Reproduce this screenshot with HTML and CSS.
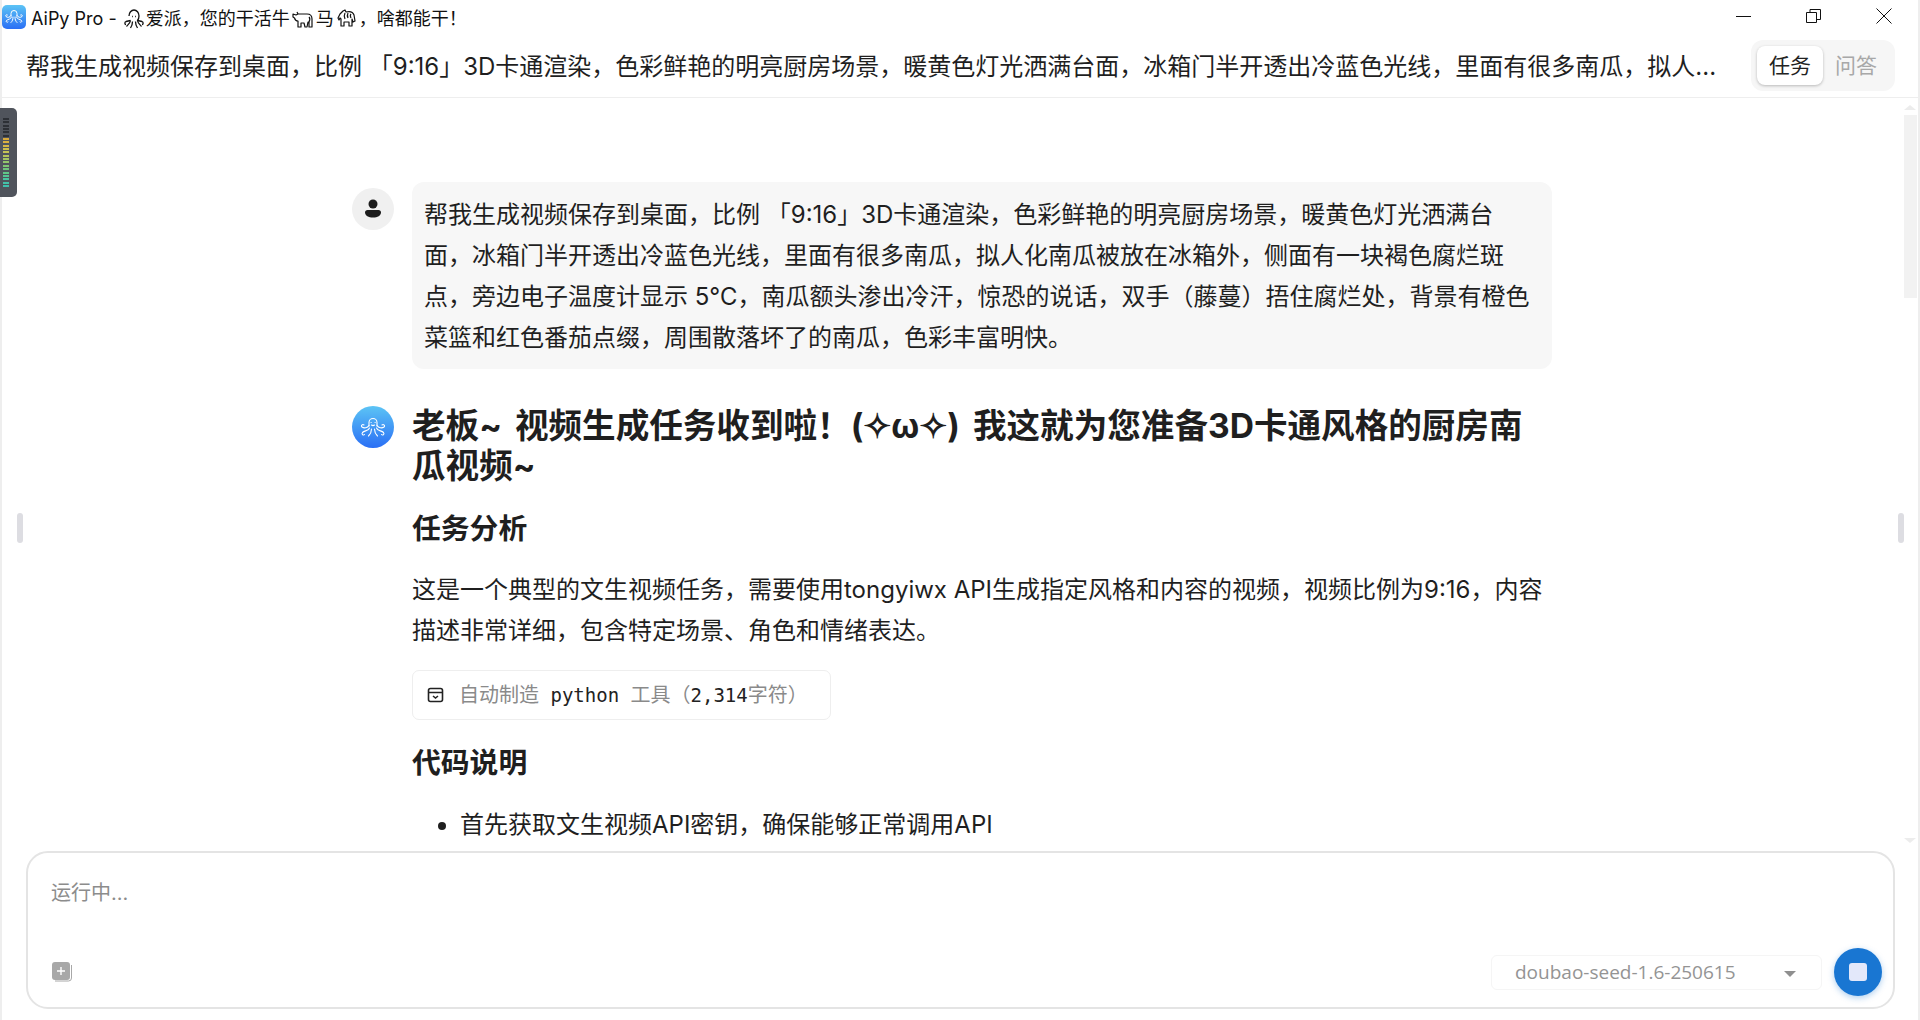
FILE: index.html
```html
<!DOCTYPE html>
<html lang="zh-CN">
<head>
  <meta charset="UTF-8">
  <title>AiPy Pro</title>
  <link rel="stylesheet" href="styles.css">
</head>
<body>
  <div class="titlebar">
    <svg class="app-icon" width="24" height="24" viewBox="0 0 24 24">
      <defs>
        <linearGradient id="iconBlue" x1="0" y1="0" x2="0" y2="1">
          <stop offset="0" stop-color="#5cc4f5"/>
          <stop offset="1" stop-color="#2a6ff5"/>
        </linearGradient>
      </defs>
      <rect width="24" height="24" rx="5" fill="url(#iconBlue)"/>
      <g fill="none" stroke="#fff" stroke-width="1" stroke-linecap="round">
        <path d="M9 11V8.500a3 3 0 0 1 6 0V11"/>
        <path d="M9 10.500c-1 2-3.500 2.500-5 1-1-1 .5-2.500 1.500-1.500M9.500 12c-.5 2.500-3.500 2-5 3.500-1 1 .5 2.500 1.500 1.500M11 12c0 2.500-.5 4-2 5.500M15 10.500c1 2 3.500 2.500 5 1 1-1-.5-2.500-1.500-1.500M14.500 12c.5 2.500 3.500 2 5 3.500 1 1-.5 2.500-1.500 1.500M13 12c0 2.500.5 4 2 5.500"/>
      </g>
    </svg>
    <span class="app-title">AiPy Pro - <svg class="emoji" width="20" height="20" viewBox="0 0 20 20" fill="#fff" stroke="#111" stroke-width="1.300" stroke-linejoin="round">
        <path d="M5 7a5 6 0 0 1 10 0c0 2-.7 3.500-1.500 4.500l4.500 1c1.500.5 1.500 3 0 3M6.500 11.500L2 12.500c-1.500.5-1.500 3 0 3"/>
        <path d="M6.500 11.500c-.5 3-2.500 4-4 6M8.500 12.500c0 3-1 5-2 6.500M11.500 12.500c0 3 1 5 2 6.500M13.500 11.500c.5 3 2.500 4 4 6" fill="none"/>
        <path d="M8 7.500h.8M11.200 7.500h.8" fill="none"/>
      </svg>爱派，您的干活牛<svg class="emoji" width="22" height="20" viewBox="0 0 22 20" fill="#fff" stroke="#111" stroke-width="1.200" stroke-linejoin="round">
        <path d="M1 5l3 1 2-1h9c3 0 5 2 5 5v8h-3v-5h-1l-1 5h-2l-1-4H9v4H6v-6c-2 0-3-1-3.500-3L1 8z"/>
        <path d="M17 8c1 1 1 3 0 5M6 5L5 3" fill="none"/>
      </svg>马<svg class="emoji" width="21" height="20" viewBox="0 0 21 20" fill="#fff" stroke="#111" stroke-width="1.200" stroke-linejoin="round">
        <path d="M2 9l2-4 3-3 2-1 1 2c4-1 7 0 8 3l1 6-2 1-1-3v7h-3v-4H8v4H5v-7L4 9 3 11z"/>
        <path d="M9 4c-1 2-1 4 0 6M12 4c-1 2-1 3 0 5M15 5c-1 1-1 2 0 4" fill="none"/>
      </svg>，啥都能干！</span>
    <div class="win-btns">
      <svg width="16" height="16" viewBox="0 0 16 16"><path d="M0 8.500h15" stroke="#111" fill="none"/></svg>
      <svg width="16" height="16" viewBox="0 0 16 16"><path d="M.5 4.500h10v10H.5zM4 4.500V1.500h10.500v10h-4" stroke="#111" fill="none"/></svg>
      <svg width="16" height="16" viewBox="0 0 16 16"><path d="M.5.500l15 15M15.500.500l-15 15" stroke="#111" fill="none"/></svg>
    </div>
  </div>

  <div class="task-head">
    <div class="task-title">帮我生成视频保存到桌面，比例 「9:16」3D卡通渲染，色彩鲜艳的明亮厨房场景，暖黄色灯光洒满台面，冰箱门半开透出冷蓝色光线，里面有很多南瓜，拟人...</div>
    <div class="tabs">
      <span class="tab active">任务</span>
      <span class="tab">问答</span>
    </div>
  </div>

  <div class="chat-area">
    <div class="chat">
      <div class="msg">
        <div class="avatar user">
          <svg width="18" height="20" viewBox="0 0 18 20" fill="#1c1c1c">
            <circle cx="9" cy="5" r="4.500"/>
            <path d="M1 13.500c0-1.500 1-2.500 2.500-2.500h11c1.500 0 2.500 1 2.500 2.500 0 3-3.500 5-8 5s-8-2-8-5z"/>
          </svg>
        </div>
        <div class="bubble">帮我生成视频保存到桌面，比例 「9:16」3D卡通渲染，色彩鲜艳的明亮厨房场景，暖黄色灯光洒满台面，冰箱门半开透出冷蓝色光线，里面有很多南瓜，拟人化南瓜被放在冰箱外，侧面有一块褐色腐烂斑点，旁边电子温度计显示 5℃，南瓜额头渗出冷汗，惊恐的说话，双手（藤蔓）捂住腐烂处，背景有橙色菜篮和红色番茄点缀，周围散落坏了的南瓜，色彩丰富明快。</div>
      </div>

      <div class="msg reply">
        <div class="avatar bot">
          <svg width="28" height="22" viewBox="0 0 28 22" fill="none" stroke="#fff" stroke-width="1.100" stroke-linecap="round">
            <path d="M10 10V6.500a4 4 0 0 1 8 0V10"/>
            <path d="M12 6.500h.2M16 6.500h.2M12.500 9c1 .8 2 .8 3 0"/>
            <path d="M10 9.500c-1.500 2.500-5 3-7 1.500-1.500-1.300.5-3.300 2-2M10.500 12c-1 3-5 2.500-7 4.500-1.300 1.500.8 3.300 2 2M12.500 13c0 3-1 5-3 7"/>
            <path d="M18 9.500c1.500 2.500 5 3 7 1.500 1.500-1.300-.5-3.300-2-2M17.500 12c1 3 5 2.500 7 4.500 1.300 1.500-.8 3.300-2 2M15.500 13c0 3 1 5 3 7"/>
          </svg>
        </div>
        <div class="reply-body">
          <h1>老板~ 视频生成任务收到啦！(✧ω✧) 我这就为您准备3D卡通风格的厨房南瓜视频~</h1>
          <h2>任务分析</h2>
          <p>这是一个典型的文生视频任务，需要使用tongyiwx API生成指定风格和内容的视频，视频比例为9:16，内容描述非常详细，包含特定场景、角色和情绪表达。</p>
          <div class="tool-chip">
            <svg width="17" height="18" viewBox="0 0 17 18" fill="none" stroke="#222" stroke-width="1.600">
              <rect x="1.500" y="2.500" width="14" height="13" rx="2"/>
              <path d="M1.500 6.500h14M6 10l2.500 2 2.500-2"/>
            </svg>
            <span>自动制造<code> python </code>工具（<code>2,314</code>字符）</span>
          </div>
          <h2>代码说明</h2>
          <ul>
            <li>首先获取文生视频API密钥，确保能够正常调用API</li>
          </ul>
        </div>
      </div>
    </div>
    <div class="scrollbar">
      <span class="arrow up"></span>
      <span class="thumb"></span>
      <span class="arrow down"></span>
    </div>
  </div>

  <div class="composer-wrap">
    <div class="composer">
      <div class="placeholder">运行中...</div>
      <div class="composer-foot">
        <svg width="22" height="22" viewBox="0 0 22 22">
          <path d="M20.500 4v13a3 3 0 0 1-3 3H4" fill="none" stroke="#a8a8a8"/>
          <rect x="1" y="1" width="18" height="18" rx="3" fill="#a8a8a8"/>
          <path d="M10 6v8M6 10h8" stroke="#fff" stroke-width="1.400"/>
        </svg>
        <div class="model-select">
          <span>doubao-seed-1.6-250615</span>
          <i class="caret"></i>
        </div>
        <button class="stop-btn"><i></i></button>
      </div>
    </div>
  </div>

  <!-- floating bits over the window -->
  <div class="meter">
    <i class="off"></i><i class="off"></i><i class="off"></i><i class="off"></i><i class="off"></i><i class="off"></i>
    <i style="background:#d9a93c"></i><i style="background:#d8b03f"></i><i style="background:#d4b845"></i><i style="background:#cdbf4c"></i><i style="background:#c3c354"></i><i style="background:#b4c55a"></i><i style="background:#a4c662"></i><i style="background:#92c66a"></i><i style="background:#80c672"></i><i style="background:#6fc67c"></i><i style="background:#60c688"></i><i style="background:#54c594"></i><i style="background:#4ac4a0"></i><i style="background:#44c2a8"></i><i style="background:#40c0ae"></i>
  </div>
  <span class="handle left"></span>
  <span class="handle right"></span>
</body>
</html>
```

FILE: styles.css
```css
* {
  box-sizing: border-box;
}

html, body {
  height: 100%;
}

body {
  margin: 0;
  display: flex;
  flex-direction: column;
  overflow: hidden;
  background: #fff;
  color: #1f1f1f;
  font-family: "Inter", "Noto Sans CJK SC", sans-serif;
  border-left: 2px solid #eeeeee;
  border-right: 2px solid #eeeeee;
}

.titlebar {
  height: 34px;
  margin: 0 -2px;
  padding-left: 2px;
  display: flex;
  align-items: center;
  gap: 5px;
  background: #fff;
  flex-shrink: 0;
}

.app-title {
  font-size: 18px;
  color: #111;
  white-space: nowrap;
}

.emoji {
  vertical-align: -4px;
  margin: 0 2px;
}

.win-btns {
  margin-left: auto;
  display: flex;
  gap: 54px;
  padding-right: 28px;
  margin-top: -2px;
}

.task-head {
  height: 64px;
  flex-shrink: 0;
  padding: 0 23px 1px 24px;
  display: flex;
  align-items: center;
  gap: 30px;
  border-bottom: 1px solid #eeeeee;
}

.task-title {
  flex: 1;
  font-size: 24px;
  white-space: nowrap;
  margin-bottom: 2px;
}

.tabs {
  display: flex;
  align-items: center;
  padding: 6px;
  background: #f6f6f6;
  border-radius: 12px;
  height: 51px;
}

.tab {
  width: 66px;
  height: 39px;
  line-height: 39px;
  text-align: center;
  font-size: 21px;
  color: #a8a8a8;
  border-radius: 8px;
}

.tab.active {
  background: #fff;
  color: #222;
  box-shadow: 0 1px 3px rgba(0,0,0,0.25);
}

.chat-area {
  flex: 1;
  min-height: 0;
  overflow: hidden;
  position: relative;
  padding-top: 84px;
}

.chat {
  width: 1200px;
  margin-left: 350px;
}

.msg {
  display: flex;
  gap: 18px;
}

.avatar {
  width: 42px;
  height: 42px;
  border-radius: 50%;
  flex-shrink: 0;
  display: flex;
  align-items: center;
  justify-content: center;
}

.avatar.user {
  margin-top: 6px;
  background: #f0f0f0;
}

.avatar.bot {
  background: linear-gradient(#5cc4f5, #2a6ff5);
}

.bubble {
  flex: 1;
  padding: 12px 12px 11px;
  background: #f7f7f7;
  border-radius: 12px;
  font-size: 24px;
  line-height: 41px;
}

.reply {
  margin-top: 37px;
}

.reply-body {
  flex: 1;
}

h1 {
  margin: 0;
  font-size: 33.600px;
  line-height: 40px;
  font-weight: 700;
  word-spacing: 5px;
}

h2 {
  margin: 23px 0 0;
  font-size: 28.800px;
  line-height: 40px;
  font-weight: 700;
}

p {
  margin: 20px 0 0;
  font-size: 24px;
  line-height: 41px;
}

.tool-chip {
  margin-top: 19px;
  display: inline-flex;
  align-items: center;
  gap: 15px;
  height: 50px;
  padding: 0 22px 0 14px;
  border: 1px solid #eeeeee;
  border-radius: 7px;
  font-size: 20px;
  color: #8a8a8a;
}

.tool-chip span {
  margin-top: -3px;
}

code {
  font-family: "DejaVu Sans Mono", monospace;
  font-size: 19px;
  color: #222;
  white-space: pre;
}

ul {
  margin: 21px 0 0;
  padding-left: 48px;
  font-size: 24px;
  line-height: 41px;
}

.scrollbar {
  position: absolute;
  top: 0;
  right: 1px;
  bottom: 0;
  width: 13px;
}

.thumb {
  position: absolute;
  top: 17px;
  left: 0;
  width: 13px;
  height: 183px;
  background: #f2f2f2;
}

.arrow {
  position: absolute;
  left: 0;
  width: 0;
  height: 0;
  border-left: 6.500px solid transparent;
  border-right: 6.500px solid transparent;
}

.arrow.up {
  top: 7px;
  border-bottom: 5px solid #ececec;
}

.arrow.down {
  bottom: 8px;
  border-top: 5px solid #ececec;
}

.composer-wrap {
  flex-shrink: 0;
  padding: 0 23px 11px 24px;
}

.composer {
  height: 158px;
  border: 2px solid #e4e4e4;
  border-radius: 22px;
  padding: 25px 11px 0 23px;
  display: flex;
  flex-direction: column;
}

.placeholder {
  font-size: 20px;
  line-height: 30px;
  color: #8c8c8c;
}

.composer-foot {
  margin-top: auto;
  margin-bottom: 11px;
  display: flex;
  align-items: center;
}

.model-select {
  margin-left: auto;
  width: 331px;
  height: 35px;
  padding: 0 25px 0 23px;
  display: flex;
  align-items: center;
  justify-content: space-between;
  border: 1px solid #f5f5f5;
  border-radius: 6px;
  font-family: "Open Sans", sans-serif;
  font-size: 19px;
  color: #949494;
}

.caret {
  margin-top: 4px;
  border-left: 6px solid transparent;
  border-right: 6px solid transparent;
  border-top: 6px solid #8f8f8f;
}

.stop-btn {
  margin-left: 12px;
  width: 48px;
  height: 48px;
  padding: 0;
  border: none;
  border-radius: 50%;
  background: #1976d2;
  box-shadow: 0 2px 6px rgba(25,118,210,0.35);
  display: flex;
  align-items: center;
  justify-content: center;
}

.stop-btn i {
  width: 18px;
  height: 18px;
  border-radius: 3px;
  background: #e3e8fa;
}

.meter {
  position: absolute;
  top: 108px;
  left: 0;
  width: 17px;
  height: 89px;
  padding: 10px 8px 0 3px;
  background: #50545c;
  border-radius: 0 5px 5px 0;
  display: flex;
  flex-direction: column;
  gap: 1.350px;
}

.meter i {
  height: 2px;
  flex-shrink: 0;
  display: block;
}

.meter i.off {
  background: #2d3036;
}

.handle {
  position: absolute;
  top: 513px;
  width: 6px;
  height: 30px;
  border-radius: 3px;
  background: #dddde2;
}

.handle.left {
  left: 17px;
}

.handle.right {
  right: 16px;
}
```
